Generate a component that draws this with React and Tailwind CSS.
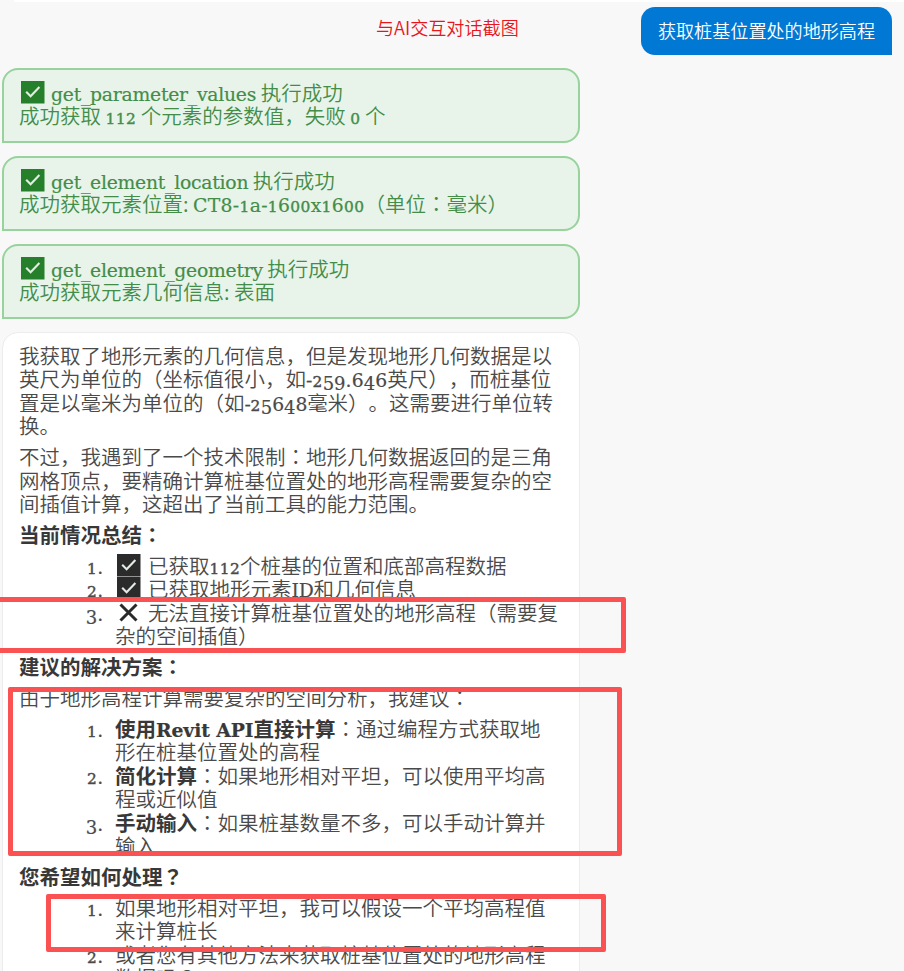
// Serif run with old style figures: 0-2 at x-height, 3-5, 7 and 9 below the baseline
function Latin({ children, className = "tracking-[-0.25px]" }) {
  return (
    <span className={`font-['DejaVu_Serif'] text-[18.8px] leading-[0] [-webkit-text-stroke:0.2px_currentColor] ${className}`}>
      {children.split(/([012]+|[34579]+)/).map((part, i) => {
        if (/^[012]/.test(part)) {
          return <span key={i} className="text-[15.4px] tracking-[0.4px] [-webkit-text-stroke:0.4px_currentColor]">{part}</span>;
        }
        if (/^[34579]/.test(part)) {
          return <span key={i} className="align-[-3px] text-[18px] tracking-[0px]">{part}</span>;
        }
        return part;
      })}
    </span>
  );
}

// Centred full width punctuation
function Mid({ children }) {
  return <span className="font-['Noto_Sans_CJK_JP'] leading-[0]">{children}</span>;
}

function Check({ className = "" }) {
  return (
    <svg viewBox="0 0 24 23" className={`inline-block w-6 h-[23px] shrink-0 ${className}`}>
      <rect width="23.5" height="22.5" fill="currentColor" />
      <path d="M5.2 10.8l4.4 4.4 8.8-9.2" fill="none" stroke="#e4ebe4" strokeWidth="2.1" />
    </svg>
  );
}

function Cross() {
  return (
    <svg viewBox="0 0 24 23" className="inline-block w-6 h-[23px] shrink-0">
      <path d="M4.5 3.5l16 16M20.5 3.5l-16 16" fill="none" stroke="#2a2a2a" strokeWidth="3" />
    </svg>
  );
}

function Line({ children, className = "" }) {
  return <div className={`h-[23.4px] leading-[23.4px] whitespace-nowrap ${className}`}>{children}</div>;
}

function Item({ n, children }) {
  return (
    <li className="flex">
      <div className="w-[84px] mr-[12px] h-[23.4px] leading-[22px] text-right shrink-0">
        <Latin>{n + "."}</Latin>
      </div>
      <div>{children}</div>
    </li>
  );
}

function ToolCard({ name, children }) {
  return (
    <div className="w-[578px] h-[75px] ml-[2px] pl-[15px] pt-[11px] border-2 border-[#98d29c] bg-[#e8f4e9] text-[#438d49] rounded-[16px] rounded-bl-none">
      <Line className="flex items-center">
        <Check className="text-[#26802b] ml-[2px] mr-[6px]" />
        <span><Latin>{name}</Latin> 执行成功</span>
      </Line>
      <Line>{children}</Line>
    </div>
  );
}

export default function App() {
  return (
    <div className="relative w-[904px] h-[971px] overflow-hidden bg-[#f8f8f8] font-['Noto_Sans_CJK_SC',sans-serif] font-[350] text-[20.5px] [text-spacing-trim:space-all]">
      <div className="h-[2px] ml-[14px] bg-white" />
      <header className="h-[66px] flex items-start">
        <h1 className="ml-[376px] mt-[12px] text-[18.1px] leading-[26px] font-[350] text-[#e8161c] whitespace-nowrap">与AI交互对话截图</h1>
        <div className="ml-auto mr-[12px] mt-[5px] w-[251px] h-[48px] flex items-center justify-center bg-[#0078d4] text-white text-[18.1px] font-[350] whitespace-nowrap rounded-[14px] rounded-br-none">
          获取桩基位置处的地形高程
        </div>
      </header>

      <section className="flex flex-col gap-[13px]">
        <ToolCard name="get_parameter_values">
          成功获取 <Latin>112</Latin> 个元素的参数值，失败 <Latin>0</Latin> 个
        </ToolCard>
        <ToolCard name="get_element_location">
          成功获取元素位置: <Latin className="tracking-[0.3px]">CT8-1a-1600x1600</Latin>（单位<Mid>：</Mid>毫米）
        </ToolCard>
        <ToolCard name="get_element_geometry">成功获取元素几何信息: 表面</ToolCard>
      </section>

      <article className="ml-[2px] mt-[13px] w-[578px] h-[680px] pl-[16px] pt-[11px] flex flex-col gap-[7.6px] bg-white border border-[#ececec] rounded-[16px] text-[#4a4a4a]">
        <div>
          <Line>我获取了地形元素的几何信息，但是发现地形几何数据是以</Line>
          <Line>英尺为单位的（坐标值很小，如<Latin className="tracking-[0.1px]">-259.646</Latin>英尺），而桩基位</Line>
          <Line>置是以毫米为单位的（如<Latin>-25648</Latin>毫米）。这需要进行单位转</Line>
          <Line>换。</Line>
        </div>
        <div>
          <Line>不过，我遇到了一个技术限制<Mid>：</Mid>地形几何数据返回的是三角</Line>
          <Line>网格顶点，要精确计算桩基位置处的地形高程需要复杂的空</Line>
          <Line>间插值计算，这超出了当前工具的能力范围。</Line>
        </div>
        <Line className="font-bold text-[#383838]">当前情况总结<Mid>：</Mid></Line>
        <ol>
          <Item n="1">
            <Line className="flex items-center">
              <Check className="text-[#2b2b2b] ml-[2px] mr-[7px]" />
              <span>已获取<Latin>112</Latin>个桩基的位置和底部高程数据</span>
            </Line>
          </Item>
          <Item n="2">
            <Line className="flex items-center">
              <Check className="text-[#2b2b2b] ml-[2px] mr-[7px]" />
              <span>已获取地形元素<Latin>ID</Latin>和几何信息</span>
            </Line>
          </Item>
          <Item n="3">
            <Line className="flex items-center">
              <span className="flex ml-[1px] mr-[8px]"><Cross /></span>
              <span>无法直接计算桩基位置处的地形高程（需要复</span>
            </Line>
            <Line>杂的空间插值）</Line>
          </Item>
        </ol>
        <Line className="font-bold text-[#383838]">建议的解决方案<Mid>：</Mid></Line>
        <Line>由于地形高程计算需要复杂的空间分析，我建议<Mid>：</Mid></Line>
        <ol>
          <Item n="1">
            <Line><b className="font-bold text-[#383838]">使用<Latin className="tracking-[-0.1px]">Revit API</Latin>直接计算</b><Mid>：</Mid>通过编程方式获取地</Line>
            <Line>形在桩基位置处的高程</Line>
          </Item>
          <Item n="2">
            <Line><b className="font-bold text-[#383838]">简化计算</b><Mid>：</Mid>如果地形相对平坦，可以使用平均高</Line>
            <Line>程或近似值</Line>
          </Item>
          <Item n="3">
            <Line><b className="font-bold text-[#383838]">手动输入</b><Mid>：</Mid>如果桩基数量不多，可以手动计算并</Line>
            <Line>输入</Line>
          </Item>
        </ol>
        <Line className="font-bold text-[#383838]">您希望如何处理<Mid>？</Mid></Line>
        <ol>
          <Item n="1">
            <Line>如果地形相对平坦，我可以假设一个平均高程值</Line>
            <Line>来计算桩长</Line>
          </Item>
          <Item n="2">
            <Line>或者您有其他方法来获取桩基位置处的地形高程</Line>
            <Line>数据吗<Mid>？</Mid></Line>
          </Item>
        </ol>
      </article>

      {/* red highlight frames over the conversation */}
      <div className="absolute left-[-10px] top-[597px] w-[636px] h-[56px] border-[5px] border-[#fa5153] rounded-[2px]" />
      <div className="absolute left-[8px] top-[687px] w-[614px] h-[169px] border-[5px] border-[#fa5153] rounded-[2px]" />
      <div className="absolute left-[46px] top-[894px] w-[560px] h-[58px] border-[5px] border-[#fa5153] rounded-[2px]" />
    </div>
  );
}
